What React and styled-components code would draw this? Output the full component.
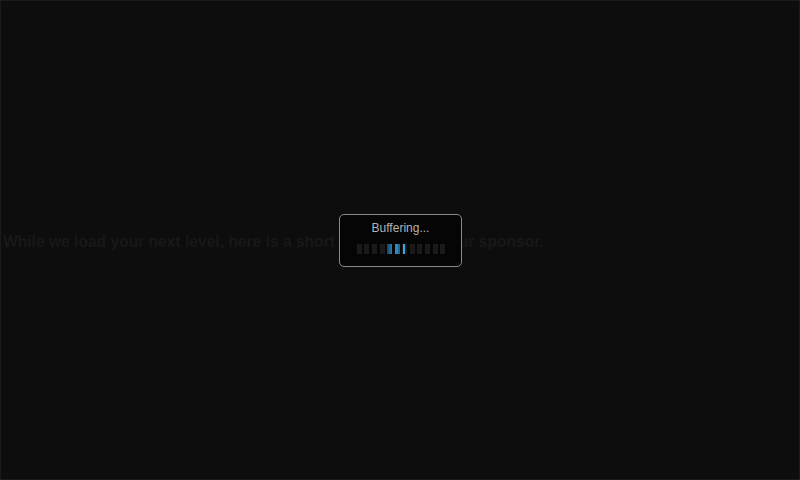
import styled, { createGlobalStyle } from "styled-components";

const GlobalStyle = createGlobalStyle`
  html, body {
    margin: 0;
    padding: 0;
    background: #0d0d0d;
  }
  * { box-sizing: border-box; }
`;

const Screen = styled.div`
  width: 800px;
  height: 480px;
  position: relative;
  display: flex;
  align-items: center;
  background: #0d0d0d;
  border: 1px solid #1b1b1b;
  overflow: hidden;
  font-family: "Liberation Sans", Arial, sans-serif;
`;

const Message = styled.p`
  margin: 0;
  padding: 3px 0 0 2px;
  font-size: 15.6px;
  font-weight: 700;
  color: #181818;
  white-space: nowrap;
`;

const Overlay = styled.div`
  position: absolute;
  inset: 0;
  display: flex;
  align-items: center;
  justify-content: center;
`;

const Dialog = styled.div`
  width: 123px;
  height: 53px;
  margin-left: 1px;
  background: #050505;
  border: 1px solid #8a8a8a;
  border-radius: 5px;
  display: flex;
  flex-direction: column;
  align-items: center;
  padding-top: 6px;
  gap: 9px;
`;

const Label = styled.div`
  font-size: 12px;
  color: #b4b4b4;
  line-height: 14px;
`;

const Bars = styled.div`
  display: flex;
  gap: 2.6px;
  margin-left: 1px;
`;

const Bar = styled.span`
  width: 5px;
  height: 10px;
  background: ${(p) => p.bg || "#1a1a1a"};
`;

const bars = [
  null,
  null,
  null,
  null,
  "linear-gradient(90deg, #173f5a, #2a80b4)",
  "linear-gradient(90deg, #2b8ac4 0 50%, #1e6694 50% 100%)",
  "linear-gradient(90deg, #1a1a1a 0 20%, #3aa6e2 20% 60%, #1a1a1a 60% 100%)",
  null,
  null,
  null,
  null,
  null,
];

export default function App() {
  return (
    <>
      <GlobalStyle />
      <Screen>
        <Message>
          While we load your next level, here is a short message from our
          sponsor.
        </Message>
        <Overlay>
          <Dialog>
            <Label>Buffering...</Label>
            <Bars>
              {bars.map((bg, i) => (
                <Bar key={i} bg={bg} />
              ))}
            </Bars>
          </Dialog>
        </Overlay>
      </Screen>
    </>
  );
}
